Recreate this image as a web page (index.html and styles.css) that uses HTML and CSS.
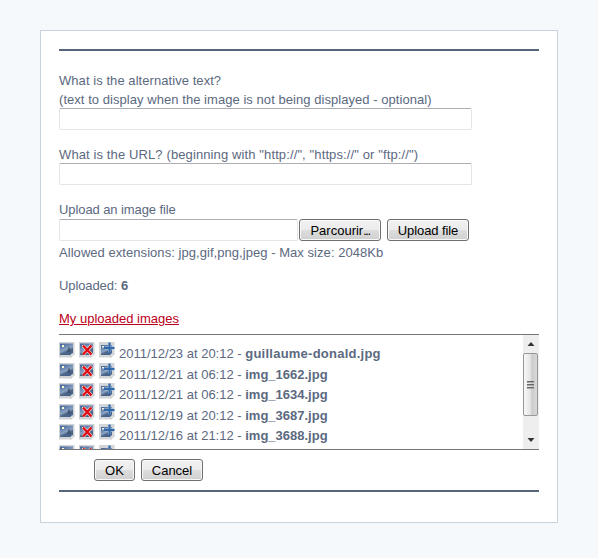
FILE: index.html
```html
<!DOCTYPE html>
<html lang="en">
<head>
<meta charset="utf-8">
<title>Insert image</title>
<link rel="stylesheet" href="styles.css">
</head>
<body>
<svg class="defs" width="0" height="0" aria-hidden="true">
  <defs>
    <linearGradient id="sky" x1="0" y1="0" x2=".5" y2="1">
      <stop offset="0" stop-color="#3c6098"/><stop offset=".6" stop-color="#8aa2c2"/><stop offset=".78" stop-color="#4d6687"/><stop offset="1" stop-color="#46628c"/>
    </linearGradient>
    <symbol id="photo" viewBox="0 0 16 16">
      <path d="M0 0h15.500v12L12 15.500H0z" fill="#d0d3d5"/>
      <path d="M1 1.500h13v9L11.500 13H1z" fill="url(#sky)"/>
      <path d="M3 3h2v2H3z" fill="#ffffd0"/>
      <path d="M10 4.500L12 10H8z" fill="#41546f"/>
      <path d="M12 15.500V12h3.500z" fill="#ececec" stroke="#b4b8bb" stroke-width=".5"/>
    </symbol>
    <symbol id="remove" viewBox="0 0 16 16">
      <use href="#photo"/>
      <path d="M4 3.500l8.500 9M12.500 3.500l-8.500 9" stroke="#f4dada" stroke-width="3.400"/>
      <path d="M4 3.500l8.500 9M12.500 3.500l-8.500 9" stroke="#dc0c12" stroke-width="2.400"/>
    </symbol>
    <symbol id="insert" viewBox="0 0 16 16">
      <path d="M0 0h15.500v12L12 15.500H0z" fill="#d3d6d9"/>
      <path d="M2 3h11v8l-2 2H2z" fill="url(#sky)"/>
      <path d="M3 4h2v1.500H3z" fill="#f3f5d8"/>
      <path d="M5.500 6H15M10.500 1v9.500" stroke="#a5bad3" stroke-width="3"/>
      <path d="M5 6H15.500M10.500 .5v10.500" stroke="#3168aa" stroke-width="2"/>
      <path d="M12 15.500V12h3.500z" fill="#ececec" stroke="#b4b8bb" stroke-width=".5"/>
    </symbol>
  </defs>
</svg>
<main class="panel">
  <form class="form">
    <section class="field">
      <label class="l1">What is the alternative text?</label>
      <label class="l2">(text to display when the image is not being displayed - optional)</label>
      <input class="text" type="text">
    </section>
    <section class="field">
      <label class="l3">What is the URL? (beginning with "http://", "https://" or "ftp://")</label>
      <input class="text" type="text">
    </section>
    <section class="field upload">
      <label class="l4">Upload an image file</label>
      <div class="file-row">
        <input class="text file" type="text"><button class="btn browse" type="button">Parcourir<span class="dots">...</span></button><button class="btn send" type="button">Upload file</button>
      </div>
      <p class="hint">Allowed extensions: jpg,gif,png,jpeg - Max size: 2048Kb</p>
    </section>
    <p class="count">Uploaded: <b>6</b></p>
    <p class="mine"><a href="#">My uploaded images</a></p>
    <div class="browser">
      <ul class="images">
        <li><svg class="ic"><use href="#photo"/></svg><svg class="ic"><use href="#remove"/></svg><svg class="ic"><use href="#insert"/></svg><span>2011/12/23 at 20:12 - <b class="wide">guillaume-donald.jpg</b></span></li>
        <li><svg class="ic"><use href="#photo"/></svg><svg class="ic"><use href="#remove"/></svg><svg class="ic"><use href="#insert"/></svg><span>2011/12/21 at 06:12 - <b>img_1662.jpg</b></span></li>
        <li><svg class="ic"><use href="#photo"/></svg><svg class="ic"><use href="#remove"/></svg><svg class="ic"><use href="#insert"/></svg><span>2011/12/21 at 06:12 - <b>img_1634.jpg</b></span></li>
        <li><svg class="ic"><use href="#photo"/></svg><svg class="ic"><use href="#remove"/></svg><svg class="ic"><use href="#insert"/></svg><span>2011/12/19 at 20:12 - <b>img_3687.jpg</b></span></li>
        <li><svg class="ic"><use href="#photo"/></svg><svg class="ic"><use href="#remove"/></svg><svg class="ic"><use href="#insert"/></svg><span>2011/12/16 at 21:12 - <b>img_3688.jpg</b></span></li>
        <li><svg class="ic"><use href="#photo"/></svg><svg class="ic"><use href="#remove"/></svg><svg class="ic"><use href="#insert"/></svg></li>
      </ul>
      <div class="scrollbar">
        <svg class="arrow" viewBox="0 0 16 18"><path d="M4.500 11L8 7l3.500 4z" fill="#333"/></svg>
        <div class="thumb"><i></i><i></i><i></i></div>
        <svg class="arrow end" viewBox="0 0 16 18"><path d="M4.500 7L8 11l3.500-4z" fill="#333"/></svg>
      </div>
    </div>
    <div class="actions">
      <button class="btn ok" type="button">OK</button><button class="btn cancel" type="button">Cancel</button>
    </div>
  </form>
</main>
</body>
</html>
```
FILE: styles.css
```css
* { box-sizing: border-box; }
body {
  margin: 0;
  padding: 30px 40px;
  background: #f5f9fc;
  color: #5c697f;
  font: 13px/19px "Liberation Sans", Arial, sans-serif;
}
.defs { display: block; position: absolute; }
p, ul { margin: 0; padding: 0; list-style: none; }
.panel {
  width: 518px;
  height: 493px;
  padding: 18px;
  background: #fff;
  border: 1px solid #c7d3e0;
}
.form {
  height: 443px;
  padding-top: 20px;
  border-top: 2px solid #56657b;
  border-bottom: 2px solid #56657b;
}
.field { display: flex; flex-direction: column; height: 74px; }
.field + .field { height: 55px; }
.field label { display: block; height: 18px; white-space: nowrap; }
.field label.l1 { height: 19px; letter-spacing: .06px; }
.l2 { letter-spacing: .05px; }
.l3 { letter-spacing: .115px; }
.l4 { letter-spacing: -.09px; }
.field.upload { height: 67px; }
.field.upload .l4 { height: 19px; }
.text {
  width: 413px;
  height: 22px;
  background: #fff;
  border: 1px solid #e2e5ea;
  border-top-color: #abadb3;
  border-radius: 2px;
}
.file-row { display: flex; height: 22px; }
.file { width: 239px; margin-right: 1px; }
.btn {
  height: 22px;
  padding: 1px 0 0;
  color: #000;
  font: 13px/19px "Liberation Sans", Arial, sans-serif;
  text-align: center;
  background: linear-gradient(#f2f2f2, #ebebeb 48%, #dddddd 52%, #cfcfcf);
  border: 1px solid #707070;
  border-radius: 3px;
  box-shadow: inset 0 0 0 1px #f8f8f8;
}
.browse { width: 82px; }
.dots { letter-spacing: -1.5px; }
.send { width: 82px; margin-left: 6px; letter-spacing: -.1px; }
.hint { height: 26px; padding-top: 2px; letter-spacing: .05px; }
.count { margin-top: 9px; height: 19px; letter-spacing: -.1px; }
.mine { margin-top: 14px; height: 19px; }
.mine a { color: #bc0020; }
.browser {
  display: flex;
  height: 116px;
  margin-top: 6px;
  border-top: 1px solid #777;
  border-bottom: 1px solid #777;
  overflow: hidden;
}
.images { flex: 1; padding-top: 7px; }
.images li { display: flex; height: 20.5px; }
.images span { padding-top: 2px; white-space: nowrap; }
.wide { letter-spacing: .24px; }
.ic { width: 16px; height: 16px; margin-right: 4px; flex: none; }
.scrollbar {
  display: flex;
  flex-direction: column;
  width: 16px;
  background: #eee;
}
.arrow { width: 16px; height: 18px; }
.end { margin-top: auto; }
.thumb {
  display: flex;
  flex-direction: column;
  justify-content: center;
  align-items: center;
  gap: 1px;
  height: 63px;
  width: 15px;
  border: 1px solid #979797;
  border-radius: 2px;
  background: linear-gradient(90deg, #f7f7f7, #e5e5e5 48%, #cccccc 60%, #d8d8d8);
}
.thumb i { width: 7px; height: 2px; background: #666; border-bottom: 1px solid #aaa; }
.actions { display: flex; gap: 6px; padding: 9px 0 0 35px; }
.ok { width: 41px; }
.cancel { width: 62px; }
```
